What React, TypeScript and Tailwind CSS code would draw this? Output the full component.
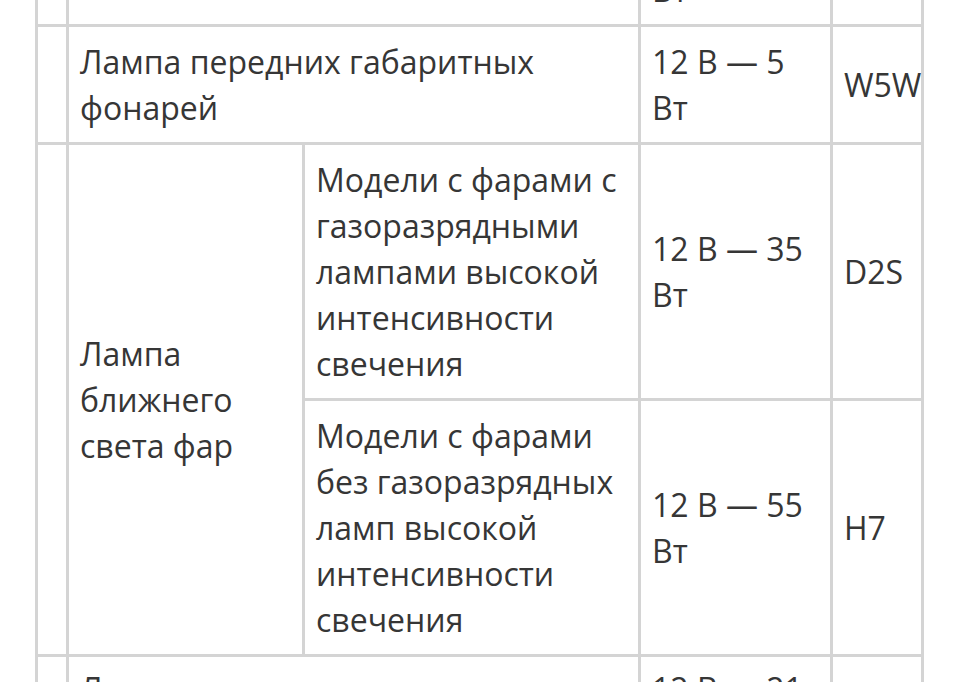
import React from "react";

const cell = "border-[3px] border-[#d4d4d4] px-[11px] pt-[12px] pb-[11px] align-middle";
const lastCell = "border-[3px] border-[#d4d4d4] px-[11px] pt-[9px] pb-[11px] align-middle";

export default function App() {
    return (
        <div className="h-[682px] w-[960px] overflow-hidden bg-white">
            <table
                className="-mt-[94px] ml-[35px] w-[888px] table-fixed border-collapse text-[32px] leading-[46px] text-[#363636]"
                style={{ fontFamily: '"Open Sans", "Noto Sans", sans-serif' }}
            >
                <colgroup>
                    <col className="w-[31px]" />
                    <col className="w-[236px]" />
                    <col className="w-[336px]" />
                    <col className="w-[192px]" />
                    <col className="w-[91px]" />
                </colgroup>
                <tbody>
                    <tr>
                        <td className={cell}></td>
                        <td className={cell} colSpan={2}>
                            Лампа задних фонарей
                        </td>
                        <td className={cell}>12 В — 5 Вт</td>
                        <td className={cell}>W5W</td>
                    </tr>
                    <tr>
                        <td className={cell}></td>
                        <td className={cell} colSpan={2}>
                            Лампа передних габаритных фонарей
                        </td>
                        <td className={cell}>12 В — 5 Вт</td>
                        <td className={cell}>W5W</td>
                    </tr>
                    <tr>
                        <td className={cell} rowSpan={2}></td>
                        <td className={cell} rowSpan={2}>
                            Лампа ближнего света фар
                        </td>
                        <td className={cell}>
                            Модели с фарами с газоразрядными лампами высокой интенсивности свечения
                        </td>
                        <td className={cell}>12 В — 35 Вт</td>
                        <td className={cell}>D2S</td>
                    </tr>
                    <tr>
                        <td className={cell}>
                            Модели с фарами без газоразрядных ламп высокой интенсивности свечения
                        </td>
                        <td className={cell}>12 В — 55 Вт</td>
                        <td className={cell}>H7</td>
                    </tr>
                    <tr>
                        <td className={lastCell}></td>
                        <td className={lastCell} colSpan={2}>
                            Лампа передних сигналов поворота (при наличии)
                        </td>
                        <td className={lastCell}>12 В — 21 Вт</td>
                        <td className={lastCell}>PY21W</td>
                    </tr>
                </tbody>
            </table>
        </div>
    );
}
